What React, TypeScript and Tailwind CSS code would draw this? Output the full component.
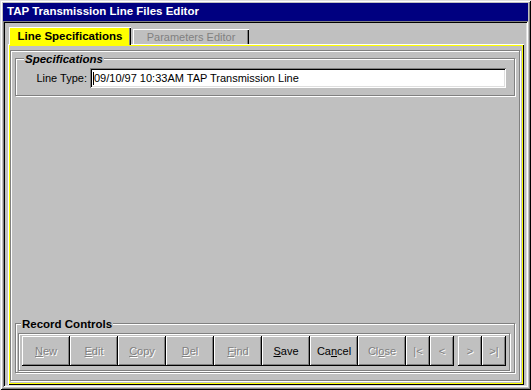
import type { ReactNode } from 'react';

const raised =
  'shadow-[inset_-1px_-1px_0_#000,inset_1px_1px_0_#fff,inset_-2px_-2px_0_#808080]';

function Mnemonic({ pre, u, post }: { pre: string; u: string; post: string }) {
  return (
    <span>
      {pre}
      <u className="underline-offset-[1px]">{u}</u>
      {post}
    </span>
  );
}

function RecordButton({
  children,
  wide = true,
  disabled = false,
}: {
  children: ReactNode;
  wide?: boolean;
  disabled?: boolean;
}) {
  return (
    <button
      type="button"
      className={`${wide ? 'w-[48px]' : 'w-[24px]'} flex h-[30px] shrink-0 items-center justify-center bg-[#c0c0c0] ${raised} ${
        disabled ? 'text-[#808080] [text-shadow:1px_1px_0_#fff]' : 'text-black'
      }`}
    >
      {children}
    </button>
  );
}

function GroupBox({
  title,
  italic = false,
  className,
  children,
}: {
  title: string;
  italic?: boolean;
  className: string;
  children: ReactNode;
}) {
  return (
    <div
      className={`relative border border-[#808080] shadow-[inset_1px_1px_0_#fff,1px_1px_0_#fff] ${className}`}
    >
      <div
        className={`absolute -top-[7px] bg-[#c0c0c0] px-[1px] text-[11.5px] font-bold leading-[14px] ${
          italic ? 'left-[8px] italic' : 'left-[5px]'
        }`}
      >
        {title}
      </div>
      {children}
    </div>
  );
}

export default function App() {
  return (
    <div className="flex h-[390px] w-[531px] flex-col bg-[#c0c0c0] p-[3px] font-['Liberation_Sans',Arial,sans-serif] text-[11px] text-black shadow-[inset_1px_1px_0_#dfdfdf,inset_-1px_-1px_0_#000,inset_2px_2px_0_#fff,inset_-2px_-2px_0_#808080]">
      <div className="flex h-[18px] shrink-0 items-center bg-[#000080] pl-[4px] text-[11.5px] font-bold text-white">
        TAP Transmission Line Files Editor
      </div>

      <div className="flex flex-1 flex-col p-[2px] shadow-[inset_1px_1px_0_#808080,inset_-1px_-1px_0_#fff,inset_2px_2px_0_#000,inset_-2px_-2px_0_#dfdfdf]">
        <div className="relative z-10 flex h-[21px] shrink-0 items-end pl-[4px]">
          <div className="-mb-[1px] flex h-[18px] w-[122px] items-center justify-center bg-[#ffff00] pt-[1px] text-[11.5px] font-bold shadow-[inset_1px_1px_0_#fff,inset_-1px_0_0_#000,inset_-2px_0_0_#808080]">
            Line Specifications
          </div>
          <div className="ml-[2px] flex h-[15px] w-[116px] items-center justify-center pt-[2px] text-[#808080] shadow-[inset_1px_1px_0_#fff,inset_-1px_0_0_#000,inset_-2px_0_0_#808080]">
            Parameters Editor
          </div>
        </div>

        <div className="ml-[3px] mr-[2px] flex flex-1 flex-col p-[2px] shadow-[inset_1px_1px_0_#fff,inset_-1px_-1px_0_#000,inset_0_0_0_2px_#ffff00]">
          <div className="mb-[2px] mr-[2px] mt-[4px] flex flex-1 flex-col border border-[#808080] px-[4px] shadow-[inset_1px_1px_0_#fff,1px_1px_0_#fff]">
            <GroupBox title="Specifications" italic className="mt-[7px] h-[38px] shrink-0">
              <div className="flex items-center pt-[9px]">
                <div className="w-[71px] text-right">Line Type:</div>
                <div className="ml-[3px] flex h-[20px] w-[416px] items-center bg-white pl-[3px] shadow-[inset_1px_1px_0_#808080,inset_-1px_-1px_0_#fff,inset_2px_2px_0_#000,inset_-2px_-2px_0_#dfdfdf]">
                  <span className="h-[13px] w-[1px] bg-black" />
                  <span>09/10/97 10:33AM TAP Transmission Line</span>
                </div>
              </div>
            </GroupBox>

            <div className="flex-1" />

            <GroupBox title="Record Controls" className="mb-[7px] h-[50px] shrink-0">
              <div className="ml-[2px] mr-[4px] mt-[9px] flex h-[38px] border border-[#808080] pl-[3px] pt-[2px] shadow-[inset_1px_1px_0_#fff,1px_1px_0_#fff]">
                <RecordButton disabled>
                  <Mnemonic pre="" u="N" post="ew" />
                </RecordButton>
                <RecordButton disabled>
                  <Mnemonic pre="" u="E" post="dit" />
                </RecordButton>
                <RecordButton disabled>
                  <Mnemonic pre="" u="C" post="opy" />
                </RecordButton>
                <RecordButton disabled>
                  <Mnemonic pre="" u="D" post="el" />
                </RecordButton>
                <RecordButton disabled>
                  <Mnemonic pre="" u="F" post="ind" />
                </RecordButton>
                <RecordButton>
                  <Mnemonic pre="" u="S" post="ave" />
                </RecordButton>
                <RecordButton>
                  <Mnemonic pre="Ca" u="n" post="cel" />
                </RecordButton>
                <RecordButton disabled>
                  <Mnemonic pre="Cl" u="o" post="se" />
                </RecordButton>
                <RecordButton wide={false} disabled>
                  |&lt;
                </RecordButton>
                <RecordButton wide={false} disabled>
                  &lt;
                </RecordButton>
                <div className="w-[4px] shrink-0" />
                <RecordButton wide={false} disabled>
                  &gt;
                </RecordButton>
                <RecordButton wide={false} disabled>
                  &gt;|
                </RecordButton>
              </div>
            </GroupBox>
          </div>
        </div>
      </div>
    </div>
  );
}
